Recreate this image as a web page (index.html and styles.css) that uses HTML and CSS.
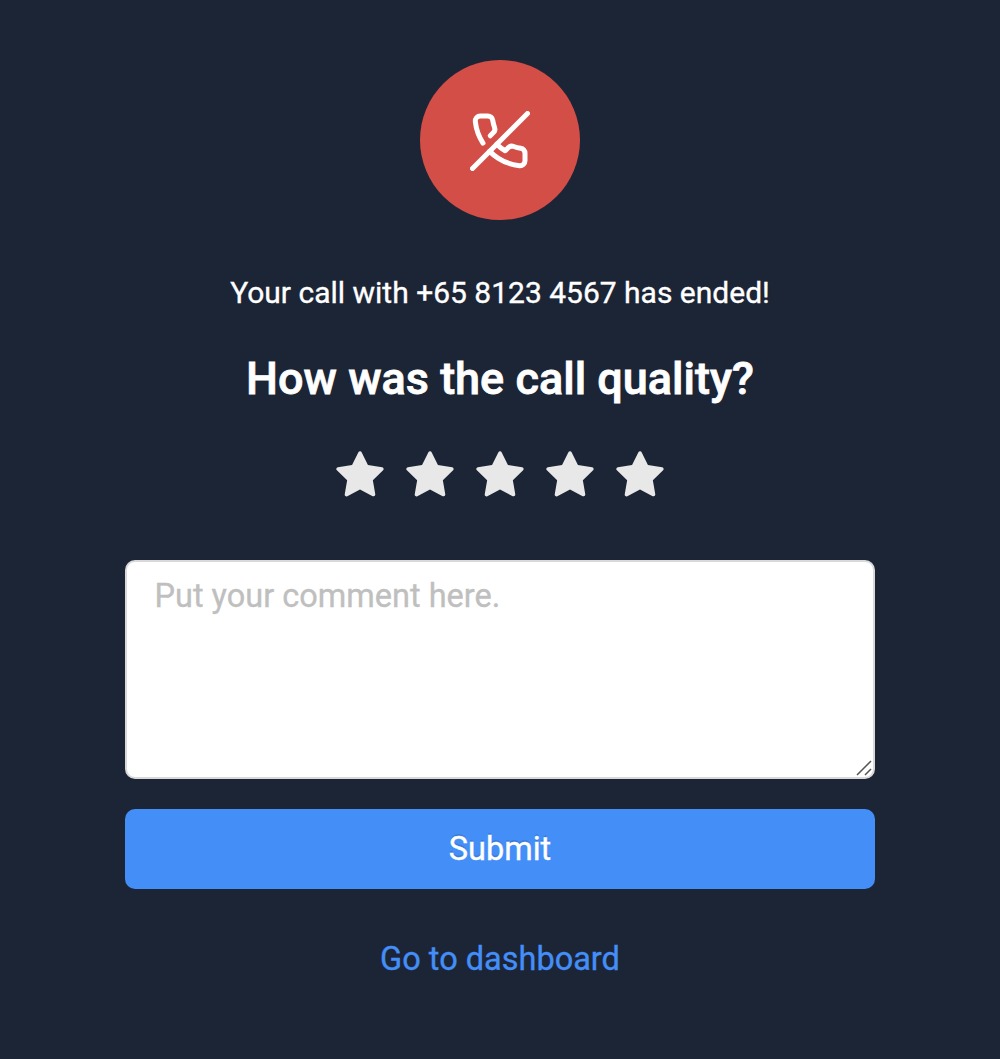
FILE: index.html
```html
<!DOCTYPE html>
<html lang="en">
<head>
<meta charset="utf-8">
<title>Call ended</title>
<link rel="stylesheet" href="styles.css">
</head>
<body>
<svg class="defs" width="0" height="0" aria-hidden="true">
  <symbol id="star" viewBox="64 64 896 896">
    <path d="M908.1 353.1l-253.9-36.9L540.7 86.1c-3.1-6.3-8.2-11.4-14.5-14.5-15.8-7.8-35-1.3-42.9 14.5L369.8 316.2l-253.9 36.9c-7 1-13.4 4.3-18.3 9.3a32.05 32.05 0 0 0 .6 45.3l183.7 179.1-43.4 252.9a31.95 31.95 0 0 0 46.4 33.7L512 754l227.1 119.4c6.2 3.3 13.4 4.4 20.3 3.2 17.4-3 29.1-19.5 26.1-36.9l-43.4-252.9 183.7-179.1c5-4.9 8.3-11.3 9.3-18.3 2.7-17.5-9.5-33.7-27-36.3z"/>
  </symbol>
</svg>
<main class="page">
  <div class="badge">
    <svg class="badge-icon" viewBox="0 0 24 24">
      <path d="M10.68 13.31a16 16 0 0 0 3.41 2.6l1.27-1.27a2 2 0 0 1 2.11-.45 12.84 12.84 0 0 0 2.81.7 2 2 0 0 1 1.72 2v3a2 2 0 0 1-2.18 2 19.79 19.79 0 0 1-8.63-3.07 19.42 19.42 0 0 1-3.33-2.67"/>
      <path d="M5.19 12.81a19.79 19.79 0 0 1-3.07-8.63A2 2 0 0 1 4.11 2h3a2 2 0 0 1 2 1.72 12.84 12.84 0 0 0 .7 2.81 2 2 0 0 1-.45 2.11L8.09 9.91"/>
      <line x1="23" y1="1" x2="1" y2="23"/>
    </svg>
  </div>
  <p class="message">Your call with +65 8123 4567 has ended!</p>
  <h1 class="title">How was the call quality?</h1>
  <div class="stars">
    <svg class="star"><use href="#star"/></svg>
    <svg class="star"><use href="#star"/></svg>
    <svg class="star"><use href="#star"/></svg>
    <svg class="star"><use href="#star"/></svg>
    <svg class="star"><use href="#star"/></svg>
  </div>
  <form class="form">
    <div class="field">
      <textarea class="comment" placeholder="Put your comment here."></textarea>
      <svg class="grip" viewBox="0 0 16 16"><path d="M1 15L15 1M9 15l6-6"/></svg>
    </div>
    <button class="submit" type="button">Submit</button>
  </form>
  <a class="link" href="#">Go to dashboard</a>
</main>
</body>
</html>
```

FILE: styles.css
```css
* {
  box-sizing: border-box;
}

body {
  margin: 0;
  background: #1c2535;
  color: #fff;
  font-family: Roboto, sans-serif;
  -webkit-text-stroke: 0.35px currentColor;
}

.defs {
  display: block;
}

.page {
  display: flex;
  flex-direction: column;
  align-items: center;
  min-height: 1059px;
  padding-top: 60px;
}

.badge {
  display: flex;
  align-items: center;
  justify-content: center;
  width: 160px;
  height: 160px;
  padding-top: 2px;
  border-radius: 50%;
  background: #d44e48;
}

.badge-icon {
  width: 60px;
  height: 60px;
  fill: none;
  stroke: #fff;
  stroke-width: 2;
  stroke-linecap: round;
  stroke-linejoin: round;
}

.message {
  margin: 48px 0 0;
  font-size: 30px;
  line-height: 50px;
}

.title {
  margin: 31px 0 0;
  font-size: 45px;
  font-weight: 500;
  line-height: 60px;
  -webkit-text-stroke-width: 0.8px;
}

.stars {
  display: flex;
  gap: 20px;
  margin-top: 42px;
}

.star {
  width: 50px;
  height: 50px;
  fill: #e8e8e8;
}

.form {
  display: flex;
  flex-direction: column;
  gap: 30px;
  width: 750px;
  margin-top: 59px;
}

.field {
  position: relative;
  height: 219px;
}

.comment {
  display: block;
  width: 100%;
  height: 100%;
  padding: 9px 27.5px;
  border: 2px solid #d9d9d9;
  border-radius: 10px;
  outline: none;
  background: #fff;
  color: #333;
  font: 32.5px/50px Roboto, sans-serif;
  resize: none;
}

.comment::placeholder {
  color: #bfbfbf;
  -webkit-text-stroke: 0.35px #bfbfbf;
}

.grip {
  position: absolute;
  right: 3px;
  bottom: 3px;
  width: 16px;
  height: 16px;
  fill: none;
  stroke: #555;
  stroke-width: 1.5;
}

.submit {
  height: 80px;
  padding: 0;
  border: 0;
  border-radius: 10px;
  background: #448ef7;
  color: #fff;
  font: 32.5px/80px Roboto, sans-serif;
  text-shadow: 0 -2px 0 rgba(0, 0, 0, 0.12);
}

.link {
  margin-top: 44px;
  color: #448ef7;
  font-size: 32.5px;
  line-height: 52px;
  text-decoration: none;
}
```
